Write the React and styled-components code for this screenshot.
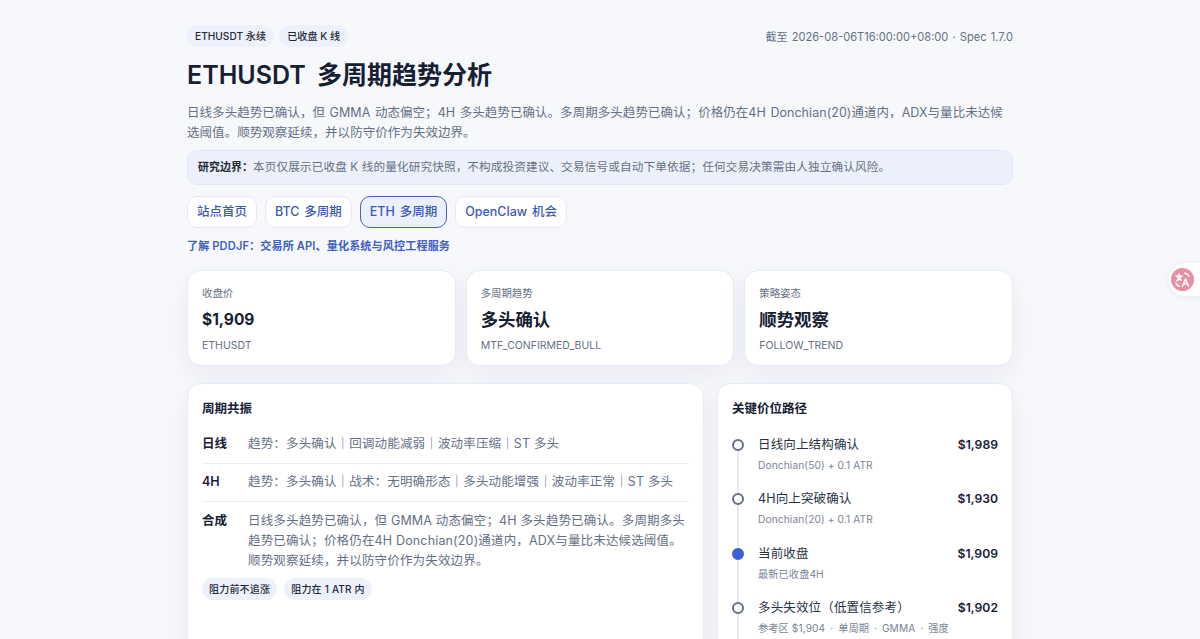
import React from 'react'
import styled, { createGlobalStyle } from 'styled-components'

const Global = createGlobalStyle`
html, body {
  margin: 0;
  height: 639px;
  overflow: hidden;
  background: #f6f8fc;
}
body {
  font-family: Inter, "Noto Sans CJK SC", sans-serif;
  color: #111827;
}
* { box-sizing: border-box; }
`

const Page = styled.div`
width: 826px;
margin: 0 auto;
padding-top: 25px;
`

const TopRow = styled.div`
display: flex;
justify-content: space-between;
align-items: center;
height: 22px;
`

const Pills = styled.div`
display: flex;
gap: 5px;
`

const Pill = styled.span`
display: inline-block;
padding: 0 8px;
height: 22px;
line-height: 22px;
border-radius: 11px;
background: #edf1fb;
color: #1f2937;
font-size: 10.1px;
font-weight: 500;
letter-spacing: 0.05px;
white-space: nowrap;
`

const Stamp = styled.div`
font-size: 11.1px;
color: #667085;
word-spacing: 1px;
`

const Title = styled.h1`
margin: 10px 0 0;
font-size: 25px;
line-height: 36px;
font-weight: 600;
color: #172033;
word-spacing: 5px;
`

const Lead = styled.p`
margin: 10px 0 0;
font-size: 12.5px;
line-height: 19.5px;
color: #667085;
letter-spacing: 0.05px;
word-spacing: 1px;
`

const Notice = styled.div`
margin-top: 8px;
height: 35px;
line-height: 33px;
padding: 0 10px;
border: 1px solid #e0e7f5;
border-radius: 10px;
background: #ebf0fb;
font-size: 11.6px;
color: #667085;
letter-spacing: 0.15px;
white-space: nowrap;

b {
  color: #1f2937;
  font-size: 10.9px;
  font-weight: 600;
  letter-spacing: 0.1px;
}
`

const Nav = styled.div`
display: flex;
gap: 8px;
margin-top: 11px;
`

const NavLink = styled.a`
display: block;
height: 32px;
line-height: 30px;
padding: 0 9px;
border-radius: 10px;
border: 1px solid ${p => (p.$active ? '#4a64b8' : '#e6eaf3')};
background: ${p => (p.$active ? '#ebf0fc' : '#ffffff')};
color: #3b59b8;
font-size: 12.5px;
font-weight: 500;
word-spacing: 1.5px;
white-space: nowrap;
`

const Service = styled.a`
display: block;
margin-top: 11px;
line-height: 14px;
font-size: 11.1px;
font-weight: 600;
color: #3f5fc4;
letter-spacing: 0.12px;
`

const Stats = styled.div`
display: grid;
grid-template-columns: repeat(3, 1fr);
gap: 10px;
margin-top: 17px;
`

const Card = styled.div`
background: #ffffff;
border: 1px solid #e7ebf3;
border-radius: 14px;
box-shadow: 0 8px 24px rgba(30, 41, 80, 0.06);
`

const StatCard = styled(Card)`
height: 96px;
padding: 15px 14px 0;
`

const StatLabel = styled.div`
font-size: 10.4px;
line-height: 16px;
color: #667085;
`

const StatValue = styled.div`
margin-top: 5px;
font-size: ${p => (p.$num ? '15.5px' : '17.4px')};
line-height: 26px;
font-weight: 700;
color: #172033;
`

const StatNote = styled.div`
margin-top: 5px;
font-size: 10.5px;
line-height: 16px;
color: #667085;
`

const Columns = styled.div`
display: grid;
grid-template-columns: 517px 296px;
gap: 13px;
margin-top: 17px;
`

const Panel = styled(Card)`
height: 400px;
padding: 16px 14px;
`

const PanelTitle = styled.h2`
margin: 0 0 6px;
font-size: 12.5px;
line-height: 18px;
font-weight: 600;
color: #172033;
`

const CycleRow = styled.div`
display: grid;
grid-template-columns: 46px 1fr;
padding: 8.5px 0 9px;
border-top: 1px solid ${p => (p.$first ? 'transparent' : '#e7ebf3')};
font-size: 12.5px;
line-height: 20px;
`

const CycleName = styled.div`
font-weight: 600;
color: #172033;
`

const CycleText = styled.div`
color: #667085;
letter-spacing: 0.16px;
`

const Tags = styled.div`
display: flex;
gap: 7px;
margin-top: -2px;
`

const Tag = styled(Pill)`
font-size: 10px;
padding: 0 7px;
letter-spacing: 0.2px;
`

const Path = styled.div`
position: relative;
margin-top: 17px;

&::before {
  content: "";
  position: absolute;
  left: 5px;
  top: 10px;
  bottom: -40px;
  width: 2px;
  background: #e6eaf3;
}
`

const Stop = styled.div`
position: relative;
display: grid;
grid-template-columns: 26px 1fr auto;
height: 54.4px;
`

const Dot = styled.span`
width: 12px;
height: 12px;
margin-top: 4px;
border-radius: 50%;
background: ${p => (p.$on ? '#3b5fd9' : '#ffffff')};
border: 2px solid ${p => (p.$on ? '#3b5fd9' : '#667085')};
`

const StopName = styled.div`
font-size: 12.5px;
line-height: 20px;
color: #273244;
letter-spacing: 0.15px;
white-space: nowrap;
`

const StopNote = styled.div`
margin-top: 2px;
font-size: 10.2px;
line-height: 16px;
color: #7b8496;
letter-spacing: 0.1px;
white-space: nowrap;
`

const StopPrice = styled.div`
font-size: 12.2px;
line-height: 20px;
font-weight: 600;
color: #172033;
`

const Widget = styled.div`
position: fixed;
right: 0;
top: 263px;
width: 31px;
height: 33px;
padding: 5px 0 0 2px;
background: #fff;
border-radius: 17px 0 0 17px;
box-shadow: 0 1px 6px rgba(30, 41, 80, 0.08);
`

const stops = [
  { name: '日线向上结构确认', note: 'Donchian(50) + 0.1 ATR', price: '$1,989' },
  { name: '4H向上突破确认', note: 'Donchian(20) + 0.1 ATR', price: '$1,930' },
  { name: '当前收盘', note: '最新已收盘4H', price: '$1,909', on: true },
  { name: '多头失效位（低置信参考）', note: '参考区 $1,904\u2009 · \u2009单周期\u2009 · \u2009GMMA\u2009 · \u2009强度', price: '$1,902' },
]

const TranslateIcon = () => (
  <svg width="23" height="23" viewBox="0 0 23 23" fill="none">
    <circle cx="11.5" cy="11.5" r="11.5" fill="#e88fa6" />
    <g stroke="#fff" strokeWidth="1.5" strokeLinecap="round" strokeLinejoin="round">
      <path d="M5 8h6M8 5.8V8M10 8c-.6 2.2-2 3.6-4.4 4.6M6.6 8.8c.8 1.6 2 2.7 3.6 3.2" />
      <path d="M11.5 18l3-7 3 7M12.6 15.8h3.8" />
      <path d="M13.5 5.2c2 .2 3.6 1.2 4.4 3M5 15c.5 1.6 1.6 2.7 3.2 3.2" />
    </g>
  </svg>
)

export default function App() {
  return (
    <Page>
      <Global />
      <TopRow>
        <Pills>
          <Pill>ETHUSDT 永续</Pill>
          <Pill>已收盘 K 线</Pill>
        </Pills>
        <Stamp>截至 2026-08-06T16:00:00+08:00 · Spec 1.7.0</Stamp>
      </TopRow>
      <Title>ETHUSDT 多周期趋势分析</Title>
      <Lead>
        日线多头趋势已确认，但 GMMA 动态偏空；4H 多头趋势已确认。多周期多头趋势已确认；价格仍在4H Donchian(20)通道内，ADX与量比未达候选阈值。顺势观察延续，并以防守价作为失效边界。
      </Lead>
      <Notice>
        <b>研究边界：</b>本页仅展示已收盘 K 线的量化研究快照，不构成投资建议、交易信号或自动下单依据；任何交易决策需由人独立确认风险。
      </Notice>
      <Nav>
        <NavLink>站点首页</NavLink>
        <NavLink>BTC 多周期</NavLink>
        <NavLink $active>ETH 多周期</NavLink>
        <NavLink>OpenClaw 机会</NavLink>
      </Nav>
      <Service>了解 PDDJF：交易所 API、量化系统与风控工程服务</Service>
      <Stats>
        <StatCard>
          <StatLabel>收盘价</StatLabel>
          <StatValue $num>$1,909</StatValue>
          <StatNote>ETHUSDT</StatNote>
        </StatCard>
        <StatCard>
          <StatLabel>多周期趋势</StatLabel>
          <StatValue>多头确认</StatValue>
          <StatNote>MTF_CONFIRMED_BULL</StatNote>
        </StatCard>
        <StatCard>
          <StatLabel>策略姿态</StatLabel>
          <StatValue>顺势观察</StatValue>
          <StatNote>FOLLOW_TREND</StatNote>
        </StatCard>
      </Stats>
      <Columns>
        <Panel>
          <PanelTitle>周期共振</PanelTitle>
          <CycleRow $first>
            <CycleName>日线</CycleName>
            <CycleText>趋势：多头确认｜回调动能减弱｜波动率压缩｜ST 多头</CycleText>
          </CycleRow>
          <CycleRow>
            <CycleName>4H</CycleName>
            <CycleText>趋势：多头确认｜战术：无明确形态｜多头动能增强｜波动率正常｜ST 多头</CycleText>
          </CycleRow>
          <CycleRow>
            <CycleName>合成</CycleName>
            <CycleText>
              日线多头趋势已确认，但 GMMA 动态偏空；4H 多头趋势已确认。多周期多头趋势已确认；价格仍在4H Donchian(20)通道内，ADX与量比未达候选阈值。顺势观察延续，并以防守价作为失效边界。
            </CycleText>
          </CycleRow>
          <Tags>
            <Tag>阻力前不追涨</Tag>
            <Tag>阻力在 1 ATR 内</Tag>
          </Tags>
        </Panel>
        <Panel>
          <PanelTitle>关键价位路径</PanelTitle>
          <Path>
            {stops.map(s => (
              <Stop key={s.name}>
                <Dot $on={s.on} />
                <div>
                  <StopName>{s.name}</StopName>
                  <StopNote>{s.note}</StopNote>
                </div>
                <StopPrice>{s.price}</StopPrice>
              </Stop>
            ))}
          </Path>
        </Panel>
      </Columns>
      <Widget>
        <TranslateIcon />
      </Widget>
    </Page>
  )
}
